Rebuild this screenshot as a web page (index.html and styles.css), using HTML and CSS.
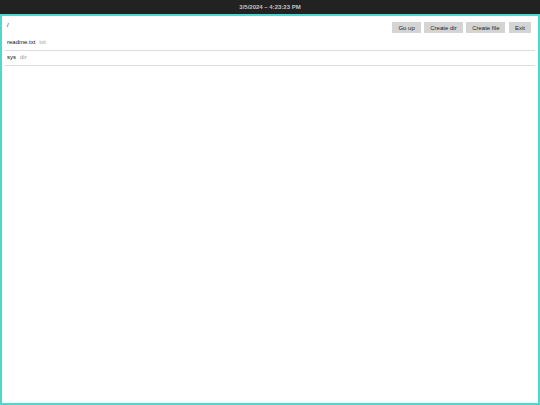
FILE: index.html
```html
<!DOCTYPE html>
<html>
<head>
<meta charset="utf-8">
<link rel="stylesheet" href="styles.css">
</head>
<body>
<div class="topbar">3/5/2024 – 4:23:23 PM</div>
<div class="window">
  <div class="header">
    <div class="path">/</div>
    <div class="actions">
      <button class="btn">Go up</button>
      <button class="btn">Create dir</button>
      <button class="btn">Create file</button>
      <button class="btn">Exit</button>
    </div>
  </div>
  <div class="list">
    <div class="row"><span class="name">readme.txt</span><span class="type">txt</span></div>
    <div class="row"><span class="name">sys</span><span class="type">dir</span></div>
  </div>
</div>
</body>
</html>
```
FILE: styles.css
```css
html, body {
  margin: 0;
  padding: 0;
  height: 100%;
}
body {
  font-family: "Liberation Sans", Arial, sans-serif;
  background: #ffffff;
  display: flex;
  flex-direction: column;
}
.topbar {
  height: 14px;
  background: #222222;
  color: #c4c4c4;
  font-size: 6px;
  font-weight: bold;
  display: flex;
  align-items: center;
  justify-content: center;
  flex: none;
}
.window {
  flex: 1;
  border: 2px solid #4fd6cf;
  padding: 4px 3px 0 3px;
  box-sizing: border-box;
}
.header {
  display: flex;
  justify-content: space-between;
  align-items: flex-start;
  padding: 0 4px 0 2px;
}
.path {
  font-size: 6px;
  color: #111;
  padding-top: 2px;
}
.actions {
  display: flex;
  gap: 3.5px;
  padding-top: 2px;
}
.btn {
  font-family: "Liberation Sans", Arial, sans-serif;
  font-size: 6px;
  color: #222;
  background: #d4d4d4;
  border: none;
  height: 11px;
  padding: 0 6px;
  margin: 0;
}
.list {
  margin-top: 3px;
}
.row {
  display: flex;
  gap: 4px;
  align-items: baseline;
  padding: 3px 2px 5px 2px;
  border-bottom: 1px solid #dcdcdc;
  font-size: 6px;
}
.name {
  color: #111;
}
.type {
  color: #9a9a9a;
}
```
